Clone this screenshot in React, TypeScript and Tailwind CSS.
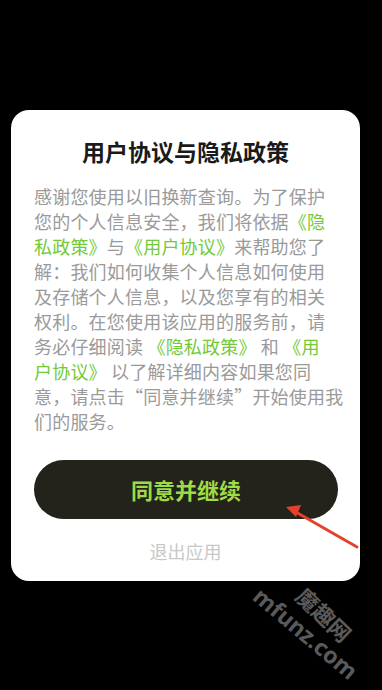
const font = { fontFamily: '"Noto Sans CJK SC", "Noto Sans", sans-serif' };

function Link({ children }: { children: React.ReactNode }) {
  return <span className="text-[#72c93a]">{children}</span>;
}

export default function App() {
  const lines: React.ReactNode[] = [
    "感谢您使用以旧换新查询。为了保护",
    <>您的个人信息安全，我们将依据<Link>《隐</Link></>,
    <><Link>私政策》</Link>与<Link>《用户协议》</Link>来帮助您了</>,
    "解：我们如何收集个人信息如何使用",
    "及存储个人信息，以及您享有的相关",
    "权利。在您使用该应用的服务前，请",
    <>务必仔细阅读 <Link>《隐私政策》</Link> 和 <Link>《用</Link></>,
    <><Link>户协议》</Link> 以了解详细内容如果您同</>,
    "意，请点击“同意并继续”开始使用我",
    "们的服务。",
  ];

  return (
    <div className="relative h-[690px] w-[382px] overflow-hidden bg-black" style={font}>
      <div className="pt-[110px] pl-[11px]">
        <div className="w-[349px] rounded-[18px] bg-white px-[23px] pt-[21px] pb-[17px]">
          <h1 className="text-center text-[23px] leading-[40px] font-bold text-[#1a1a1a]">
            用户协议与隐私政策
          </h1>
          <div className="mt-[13px] text-[18px] leading-[25px] tracking-[0.2px] text-[#9a9a9a] whitespace-pre">
            {lines.map((l, i) => (
              <div key={i}>{l}</div>
            ))}
          </div>
          <button className="mt-[26px] flex h-[59px] w-[304px] items-center justify-center rounded-full bg-[#23231b] text-[22px] font-bold text-[#9edc45]">
            同意并继续
          </button>
          <div className="mt-[19px] text-center text-[18px] leading-[26px] text-[#c8c8c8]">
            退出应用
          </div>
        </div>
      </div>

      {/* red arrow */}
      <svg className="absolute left-0 top-0" width="382" height="690">
        <line x1="357" y1="547" x2="294" y2="511" stroke="#e5412d" strokeWidth="3" strokeLinecap="round" />
        <polygon points="286,507 301,505 296,517" fill="#e5412d" />
      </svg>

      {/* watermark */}
      <div
        className="absolute left-[257px] top-[577px] origin-left rotate-[40deg] text-[23px] leading-[30px] font-bold text-[#5a5a5a]"
        style={{ fontFamily: '"Noto Sans", sans-serif' }}
      >
        mfunz.com
      </div>
      <div className="absolute left-[301px] top-[576px] origin-left rotate-[44deg] text-[22px] leading-[30px] font-bold text-[#5a5a5a]">
        魔趣网
      </div>
    </div>
  );
}
